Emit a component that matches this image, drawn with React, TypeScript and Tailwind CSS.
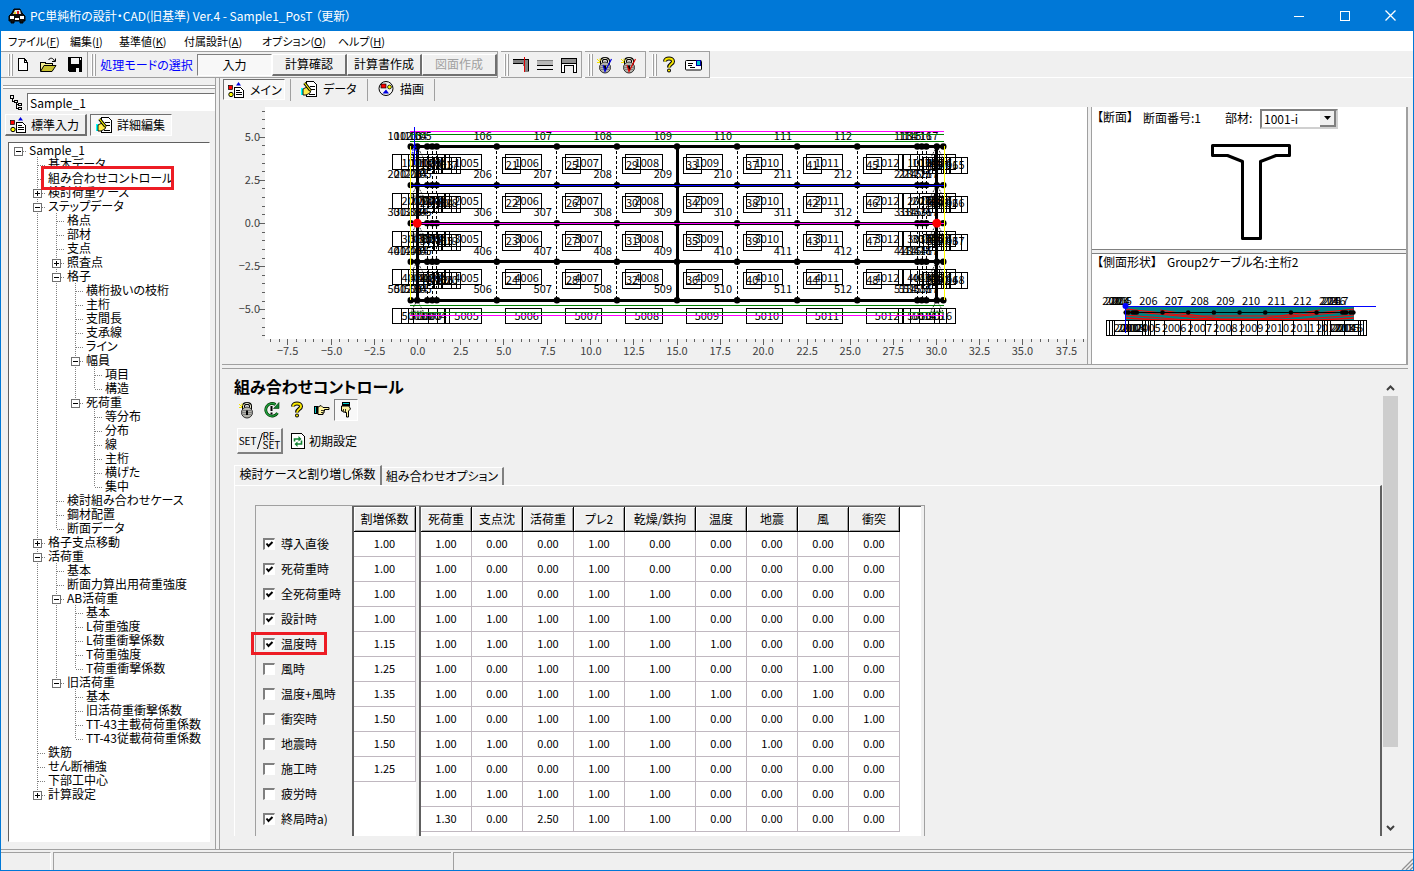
import React, { useState } from "react";
import type { ReactNode } from "react";

/* ---------- icons ---------- */

const crisp = { shapeRendering: "crispEdges" as const };

function CarIcon() {
  return (
    <svg width="18" height="16" viewBox="0 0 18 16" aria-hidden="true">
      <path d="M4 5 L6 1 H12 L14 5 L17 8 V13 H15 V15 H12 V13 H6 V15 H3 V13 H1 V8 Z" fill="#111" stroke="#000" />
      <path d="M5 6 L7 2 H12 L13 6 Z" fill="#e8e8e8" />
      <path d="M9 3 H11 V6 H9 Z" fill="#e02020" />
      <path d="M6 4 H8 V6 H6 Z" fill="#e8d820" />
      <path d="M2 8 H6 V11 H2 Z M12 8 H16 V11 H12 Z M7 10 H11 V12 H7 Z" fill="#fff" />
    </svg>
  );
}

function NewIcon() {
  return (
    <svg width="16" height="16" viewBox="0 0 16 16" {...crisp} aria-hidden="true">
      <path d="M3.500 1.500 H9.500 L12.500 5.500 V13.500 H3.500 Z" fill="#fff" stroke="#000" />
      <path d="M9.500 1.500 V5.500 H12.500" fill="none" stroke="#000" />
    </svg>
  );
}

function OpenIcon() {
  return (
    <svg width="18" height="16" viewBox="0 0 18 16" aria-hidden="true">
      <path d="M1.500 14 V5 H6 L7 6.500 H13 V8.500" fill="#f4ee90" stroke="#000" {...crisp} />
      <path d="M1.500 14.500 L5 8.500 H17 L13 14.500 Z" fill="#c8c030" stroke="#000" />
      <path d="M9.500 3 C11 .5 14 .5 15.500 4 M16.500 1.500 V4.500 H13" fill="none" stroke="#000" />
    </svg>
  );
}

function SaveIcon() {
  return (
    <svg width="16" height="16" viewBox="0 0 16 16" {...crisp} aria-hidden="true">
      <path d="M1 0 H15 V15 H2 L1 14 Z" fill="#000" />
      <path d="M4 1 H12 V7 H4 Z" fill="#f4f4f4" />
      <path d="M4 10 H12 V15 H4 Z" fill="#000" />
      <path d="M9 11 H12 V15 H9 Z" fill="#f4f4f4" />
      <path d="M13 1 H14 V3 H13 Z" fill="#fff" />
    </svg>
  );
}

function ShapesDocIcon() {
  return (
    <svg width="16" height="16" viewBox="0 0 16 16" aria-hidden="true">
      <path d="M8 3.500 L10.500 0 L13 3.500 Z" fill="#0000e0" />
      <rect x=".5" y="3.500" width="4" height="4" fill="#f00" stroke="#000" strokeWidth=".7" />
      <circle cx="3" cy="12.500" r="2.200" fill="#ff0" stroke="#000" />
      <path d="M6.500 5.500 H12.500 L15.500 8.500 V15.500 H6.500 Z" fill="#fff" stroke="#000" {...crisp} />
      <path d="M8 8.500 H12 M8 10.500 H14 M8 12.500 H14" stroke="#000" {...crisp} />
    </svg>
  );
}

function EditDocIcon() {
  return (
    <svg width="16" height="16" viewBox="0 0 16 16" aria-hidden="true">
      <path d="M5.500 .5 H12.500 L15.500 3.500 V15.500 H5.500 Z" fill="#fff" stroke="#000" {...crisp} />
      <path d="M9 5.500 H14 M10 8.500 H14 M8 13.500 H14" stroke="#000" {...crisp} />
      <path d="M0 7 H2 V14 H0 Z" fill="#0ff" />
      <path d="M2 8 L6 6 L10 9 L9 12 L5 14 H2 Z" fill="#ffec50" stroke="#000" strokeWidth=".9" />
      <path d="M3.500 2 L9.500 9.500" stroke="#000" strokeWidth="3" />
      <path d="M3.500 2 L9.500 9.500" stroke="#ff0" strokeWidth="1.200" />
    </svg>
  );
}

function DrawIcon() {
  return (
    <svg width="16" height="16" viewBox="0 0 16 16" aria-hidden="true">
      <circle cx="8" cy="7.500" r="7" fill="#f4f4f4" stroke="#000" />
      <rect x="3" y="3" width="5" height="4" fill="#f00" stroke="#000" strokeWidth=".7" />
      <circle cx="11.500" cy="6" r="1.900" fill="#ff0" stroke="#000" strokeWidth=".8" />
      <path d="M4.500 12.500 L8 8.500 L11 12.500 Z" fill="#0000e0" />
    </svg>
  );
}

function TreeIcon() {
  return (
    <svg width="14" height="16" viewBox="0 0 14 16" {...crisp} aria-hidden="true">
      <path
        d="M1.500 1.500 H4.500 V4.500 H1.500 Z M5.500 6.500 H8.500 V8.500 H5.500 Z M9.500 9.500 H12.500 V11.500 H9.500 Z M9.500 13.500 H12.500 V15.500 H9.500 Z M3.500 5 V7.500 H5 M7.500 9 V14.500 H9 M7.500 10.500 H9"
        fill="none"
        stroke="#000"
      />
    </svg>
  );
}

function GirderCutIcon() {
  return (
    <svg width="18" height="16" viewBox="0 0 18 16" {...crisp} aria-hidden="true">
      <path d="M1 2 H17 V15 H13 L11 7 L1 6 Z" fill="#808080" />
      <path d="M1 2.500 H17 M1 6.500 H11 M16.500 3 V14" stroke="#000" fill="none" />
      <path d="M12.500 0 V15" stroke="#e00000" />
    </svg>
  );
}

function GirderSideIcon() {
  return (
    <svg width="18" height="16" viewBox="0 0 18 16" {...crisp} aria-hidden="true">
      <path d="M1 3 H17 V9 H1 Z" fill="#b8b8b8" />
      <path d="M1 8.500 H17 M1 12.500 H17" stroke="#000" />
      <path d="M1 3.500 H17" stroke="#808080" />
    </svg>
  );
}

function PierIcon() {
  return (
    <svg width="18" height="16" viewBox="0 0 18 16" {...crisp} aria-hidden="true">
      <path d="M1.500 2.500 H16.500 V15.500 H13.500 V8.500 H4.500 V15.500 H1.500 Z" fill="#fff" stroke="#000" />
      <path d="M1.500 1.500 H16.500 V6.500 H1.500 Z" fill="#909090" stroke="#000" />
    </svg>
  );
}

function LockIcon({ check }: { check?: string }) {
  return (
    <svg width="18" height="18" viewBox="0 0 18 18" aria-hidden="true">
      <path d="M5.500 8 V5 C5.500 1.500 12.500 1.500 12.500 5 V8" fill="none" stroke="#000" strokeWidth="3" />
      <path d="M5.500 8 V5 C5.500 1.500 12.500 1.500 12.500 5 V8" fill="none" stroke="#e8e8d0" strokeWidth="1" />
      <circle cx="9" cy="11.500" r="5.500" fill="#b4b4ac" stroke="#303030" />
      <path d="M4 9.500 H14 M4 11.500 H14 M4.500 13.500 H13.500" stroke="#808080" {...crisp} />
      <path d="M9 9.500 V14 M8 10.500 H10" stroke="#000" strokeWidth="2" />
      <path d="M1 3 L4 6 M4 2.500 V5 M1 6.500 H4" stroke="#f0e000" />
      {check && <path d="M7 9 L9 15.500 L15.500 3" fill="none" stroke={check} strokeWidth="1.200" />}
    </svg>
  );
}

function HelpIcon() {
  return (
    <svg width="14" height="17" viewBox="0 0 14 17" aria-hidden="true">
      <path d="M3 5.500 C3 1.500 11 1.500 11 5.500 C11 8 7 8 7 11.500" fill="none" stroke="#000" strokeWidth="4" />
      <circle cx="7" cy="14.500" r="2" fill="#000" />
      <path d="M3 5.500 C3 1.500 11 1.500 11 5.500 C11 8 7 8 7 11.500" fill="none" stroke="#f4e400" strokeWidth="2" />
      <circle cx="7" cy="14.500" r="1.100" fill="#f4e400" />
    </svg>
  );
}

function MailIcon() {
  return (
    <svg width="17" height="12" viewBox="0 0 17 12" aria-hidden="true">
      <rect x=".5" y="1.500" width="16" height="9.500" rx="1" fill="#fff" stroke="#000" />
      <path d="M3 4.500 H8 M3 6.500 H7 M5 8.500 H10" stroke="#000" {...crisp} />
      <path d="M11.500 1.500 H15.500 V6.500 H11.500 Z" fill="#0cc" stroke="#0000a0" {...crisp} />
    </svg>
  );
}

function ReloadIcon() {
  return (
    <svg width="16" height="16" viewBox="0 0 16 16" aria-hidden="true">
      <path d="M11.500 2.500 A6.300 6.300 0 1 0 13.500 11" fill="none" stroke="#003800" strokeWidth="2.800" />
      <path d="M11.500 2.500 A6.300 6.300 0 1 0 13.500 11" fill="none" stroke="#20a040" strokeWidth="1.400" />
      <path d="M15 .5 V6.500 H9.500 Z" fill="#108030" stroke="#003800" strokeWidth=".6" />
      <path d="M7.500 4 V9 M7.500 10.500 V12.500" stroke="#000" strokeWidth="2" />
    </svg>
  );
}

function HandIcon({ down }: { down?: boolean }) {
  return (
    <svg width="16" height="16" viewBox="0 0 16 16" className={down ? "rotate-90" : ""} aria-hidden="true">
      <path d="M0 4 H4 V12 H0 Z" fill="#000" />
      <path d="M1 5 H2 V11 H1 Z" fill="#0cc" />
      <path
        d="M4 5 L7 3.500 L9 5.500 H15 V7.500 H10.500 V9 H10 V11 H9 V12.500 H4 Z"
        fill="#fff4a0"
        stroke="#000"
        strokeWidth="1"
      />
      <path d="M7 8.500 H10 M7 10.500 H9" stroke="#000" strokeWidth=".8" />
    </svg>
  );
}

function ResetDocIcon() {
  return (
    <svg width="14" height="16" viewBox="0 0 14 16" aria-hidden="true">
      <path d="M.5 .5 H10.500 L13.500 3.500 V15.500 H.5 Z" fill="#fff" stroke="#000" {...crisp} />
      <path d="M3.500 8.500 V6 H8 M10.500 7.500 V11 H6" fill="none" stroke="#108030" strokeWidth="1.600" />
      <path d="M7.500 3 L10.500 6 L7.500 8.500 Z M6.500 8.500 L3.500 11 L6.500 14 Z" fill="#108030" />
    </svg>
  );
}

/* ---------- small building blocks ---------- */

function Grip() {
  return (
    <span className="flex h-[22px] shrink-0 gap-px pl-[3px]">
      <span className="w-0.5 border-r border-[#a0a0a0] bg-white" />
      <span className="w-0.5 border-r border-[#a0a0a0] bg-white" />
    </span>
  );
}

function BarGroup({ className, children }: { className?: string; children: ReactNode }) {
  return (
    <div className={`flex h-[27px] items-center border border-l-0 border-[#a0a0a0] ${className ?? "mr-[3px]"}`}>
      <Grip />
      {children}
    </div>
  );
}

function IconButton({ label, className, children }: { label: string; className?: string; children: ReactNode }) {
  return (
    <button type="button" aria-label={label} className={`grid h-[22px] shrink-0 place-items-center ${className ?? "w-6"}`}>
      {children}
    </button>
  );
}

function ModeButton({ label, pressed, disabled }: { label: string; pressed?: boolean; disabled?: boolean }) {
  const look = pressed
    ? "border border-t-[#808080] border-l-[#808080] border-r-white border-b-white bg-[#f8f8f8]"
    : "border-r-2 border-b-2 border-t border-l border-t-white border-l-white border-r-[#707070] border-b-[#707070]";
  return (
    <button
      type="button"
      disabled={disabled}
      className={`h-[22px] w-[75px] text-center text-[12px] leading-[18px] ${look} ${disabled ? "text-[#a0a0a0]" : "text-black"}`}
    >
      {label}
    </button>
  );
}

/* ---------- tree ---------- */

type Node = { t: string; open?: boolean; c?: Node[] };
const leaf = (...names: string[]): Node[] => names.map((t) => ({ t }));

const TREE: Node = {
  t: "Sample_1",
  open: true,
  c: [
    ...leaf("基本データ", "組み合わせコントロール"),
    { t: "検討荷重ケース", open: false },
    {
      t: "ステップデータ",
      open: true,
      c: [
        ...leaf("格点", "部材", "支点"),
        { t: "照査点", open: false },
        {
          t: "格子",
          open: true,
          c: [
            ...leaf("横桁扱いの枝桁", "主桁", "支間長", "支承線", "ライン"),
            { t: "幅員", open: true, c: leaf("項目", "構造") },
            { t: "死荷重", open: true, c: leaf("等分布", "分布", "線", "主桁", "横げた", "集中") },
          ],
        },
        ...leaf("検討組み合わせケース", "鋼材配置", "断面データ"),
      ],
    },
    { t: "格子支点移動", open: false },
    {
      t: "活荷重",
      open: true,
      c: [
        ...leaf("基本", "断面力算出用荷重強度"),
        { t: "AB活荷重", open: true, c: leaf("基本", "L荷重強度", "L荷重衝撃係数", "T荷重強度", "T荷重衝撃係数") },
        { t: "旧活荷重", open: true, c: leaf("基本", "旧活荷重衝撃係数", "TT-43主載荷荷重係数", "TT-43従載荷荷重係数") },
      ],
    },
    ...leaf("鉄筋", "せん断補強", "下部工中心"),
    { t: "計算設定", open: false },
  ],
};

function Guide({ up, down, right, box }: { up?: boolean; down?: boolean; right?: boolean; box?: "+" | "-" }) {
  return (
    <svg width="19" height="14" viewBox="0 0 19 14" className="shrink-0" {...crisp} aria-hidden="true">
      <g stroke="#808080" strokeDasharray="1 1">
        {up && <path d="M9.500 0 V8" />}
        {down && <path d="M9.500 8 V14" />}
        {right && <path d="M10 8.500 H18" />}
      </g>
      {box && (
        <g>
          <rect x="5.500" y="4.500" width="8" height="8" fill="#fff" stroke="#707070" />
          <path d={box === "+" ? "M7 8.500 H12 M9.500 6 V11" : "M7 8.500 H12"} stroke="#000" />
        </g>
      )}
    </svg>
  );
}

function TreeRow({ node, trail, last, root }: { node: Node; trail: boolean[]; last: boolean; root?: boolean }) {
  const box = node.open === undefined ? undefined : node.open ? "-" : "+";
  const marked = node.t === "組み合わせコントロール";
  return (
    <li>
      <div className="relative flex h-[14px] items-center">
        {trail.map((line, i) => (
          <Guide key={i} up={line} down={line} />
        ))}
        <Guide up={!root} down={!root && !last} right box={box} />
        {marked && <span className="absolute -top-[5px] left-[32px] h-[24px] w-[133px] border-[3px] border-[#ed1c24] bg-white" />}
        <span className={`pl-px whitespace-nowrap ${marked ? "relative z-10" : ""}`}>{node.t}</span>
        {marked && <span className="absolute -top-[5px] left-[32px] z-10 h-[24px] w-[133px] border-[3px] border-[#ed1c24]" />}
      </div>
      {node.c && (
        <ul>
          {node.c.map((child, i) => (
            <TreeRow key={i} node={child} trail={[...trail, !root && !last]} last={i === node.c!.length - 1} />
          ))}
        </ul>
      )}
    </li>
  );
}

function Sidebar() {
  return (
    <aside className="flex w-[219px] shrink-0 flex-col border-r border-[#a0a0a0] pr-[3px]">
      <div className="flex min-h-0 flex-1 flex-col border-r border-[#a0a0a0] pb-[7px]">
        <div className="mt-[7px] ml-0.5 h-1 border-t border-b border-[#a0a0a0] bg-white" />
        <div className="mt-1 flex items-center pl-2">
          <TreeIcon />
          <input
            aria-label="データ名"
            defaultValue="Sample_1"
            className="ml-1 h-[18px] min-w-0 flex-1 border border-t-[#707070] border-r-white border-b-white border-l-[#707070] bg-white pl-0.5 text-[12px] leading-4 outline-none"
          />
        </div>
        <div className="mt-[3px] flex gap-[3px] pl-1">
          <button
            type="button"
            className="flex h-[22px] w-[82px] items-center gap-[5px] border-t border-r-2 border-b-2 border-l border-t-white border-r-[#707070] border-b-[#707070] border-l-white pl-1"
          >
            <ShapesDocIcon />
            標準入力
          </button>
          <button
            type="button"
            className="flex h-[22px] w-[82px] items-center gap-[5px] border border-t-[#707070] border-r-white border-b-white border-l-[#707070] bg-[#f8f8f8] pl-[5px]"
          >
            <EditDocIcon />
            詳細編集
          </button>
        </div>
        <ul className="mt-[6px] mr-[5px] ml-[7px] min-h-0 flex-1 overflow-hidden border border-t-[#606060] border-r-white border-b-white border-l-[#606060] bg-white leading-[14px]">
          <TreeRow node={TREE} trail={[]} last root />
        </ul>
      </div>
    </aside>
  );
}

/* ---------- drawings ---------- */

const NODES = [410.5, 417, 427, 432, 436.5, 496.5, 556.5, 616.5, 676.5, 736.5, 796.5, 856.5, 916.5, 921, 925.5, 936, 942.5];
const GIRDERS = [146.5, 185, 223, 261.5, 300];
const mids = NODES.slice(1).map((x, i) => (x + NODES[i]) / 2);
const X0 = 417.5;
const Y0 = 223.5;
const UNIT = 17.27;

function PlanView() {
  const xt = Array.from({ length: 112 }, (_, i) => (i - 17) / 2).filter((v) => v <= 38.5);
  const yt = Array.from({ length: 27 }, (_, i) => (i - 13) / 2);
  const px = (v: number) => Math.round(X0 + v * UNIT - 0.5) + 0.5;
  const py = (v: number) => Math.round(Y0 - v * UNIT - 0.5) + 0.5;
  return (
    <svg viewBox="225 107 861 257" className="h-[257px] w-full" preserveAspectRatio="xMinYMin slice" role="img" aria-label="平面図">
      <rect x="265" y="107" width="1200" height="232" fill="#fff" />
      <g stroke="#606060" {...crisp}>
        {xt.map((v) => (
          <path key={v} d={`M${px(v)} 339 v${v % 2.5 === 0 ? 6 : 3}`} />
        ))}
        {yt.map((v) => (
          <path key={v} d={`M265 ${py(v)} h${v % 2.5 === 0 ? -6 : -3}`} />
        ))}
      </g>
      <g fill="#404040" fontSize="11">
        {xt
          .filter((v) => v % 2.5 === 0)
          .map((v) => (
            <text key={v} x={px(v)} y="355" textAnchor="middle">
              {v < 0 ? `−${(-v).toFixed(1)}` : v.toFixed(1)}
            </text>
          ))}
        {[5, 2.5, 0, -2.5, -5].map((v) => (
          <text key={v} x="260" y={py(v) + 3} textAnchor="end">
            {v < 0 ? `−${(-v).toFixed(1)}` : v.toFixed(1)}
          </text>
        ))}
      </g>

      <g {...crisp} fill="none">
        {NODES.map((x, i) =>
          [1, 8, 15].includes(i) ? (
            <path key={x} d={`M${x} 146 V300`} stroke="#000" strokeWidth="3" />
          ) : i > 0 && i < 16 ? (
            <path key={x} d={`M${Math.floor(x) + 0.5} 146 V300`} stroke="#000" strokeDasharray="3 2" />
          ) : null,
        )}
        {GIRDERS.map((y) => (
          <path key={y} d={`M410 ${y} H943`} stroke="#000" strokeWidth="3" />
        ))}
      </g>
      {GIRDERS.map((y) => NODES.map((x) => <circle key={`${x}-${y}`} cx={x} cy={y} r="3.200" />))}
      <g fill="none" stroke="#000" strokeWidth=".8" strokeDasharray="2 1">
        {GIRDERS.map((y) => (
          <path key={y} d={`M417 ${y} l-6 11 h12 z M936 ${y} l-6 11 h12 z`} />
        ))}
      </g>

      <g {...crisp} fill="none" stroke="#000">
        {GIRDERS.map((y) =>
          mids.map((m) => <rect key={`${m}-${y}`} x={Math.floor(m - 21) + 0.5} y={Math.floor(y) + 8.5} width="36" height="15" />),
        )}
        {GIRDERS.slice(0, 4).map((y) =>
          NODES.map((x) => <rect key={`${x}-${y}`} x={Math.floor(x + 6) + 0.5} y={Math.floor(y) + 11.5} width="18" height="16" />),
        )}
      </g>
      <g fontSize="11">
        {GIRDERS.map((y, r) =>
          NODES.map((x, i) => (
            <text key={`${x}-${y}`} x={x - 5} y={y - 7} textAnchor="end">
              {(r + 1) * 100 + i + 1}
            </text>
          )),
        )}
        {GIRDERS.map((y, r) =>
          mids.map((m, i) => (
            <text key={`${m}-${y}`} x={m + 12} y={y + 20} textAnchor="end">
              {(r + 1) * 1000 + i + 1}
            </text>
          )),
        )}
        {GIRDERS.slice(0, 4).map((y, r) =>
          NODES.map((x, i) => (
            <text key={`${x}-${y}`} x={x + 9} y={y + 22}>
              {i * 4 + r + 1}
            </text>
          )),
        )}
      </g>

      <g {...crisp} fill="none">
        <path d="M410 134.500 H943 M410 141.500 H943 M410 305.500 H943 M410 312.500 H943" stroke="#008000" />
        <path d="M410 131.500 H943 M410 315.500 H943 M410 223.500 H943" stroke="#f0f" />
        <path d="M410 185.500 H943" stroke="#00f" />
        <path d="M410.500 146 V300 M943.500 146 V300" stroke="#ff0" />
        <path d="M414.500 127 V165" stroke="#00f" />
      </g>
      <path d="M414.500 143 l-3 12 M414.500 143 l3 12" stroke="#00f" strokeDasharray="2 1" />
      <circle cx="417" cy="223" r="4.500" fill="#f00" />
      <circle cx="936" cy="223" r="4.500" fill="#f00" />
    </svg>
  );
}

function SectionView() {
  return (
    <svg width="80" height="98" viewBox="1211 143 80 98" className="mx-auto" role="img" aria-label="断面図">
      <path
        d="M1212.500 145.500 H1289.500 V155.500 H1276 L1260.500 161.500 V238.500 H1242.500 V161.500 L1227.500 155.500 H1212.500 Z"
        fill="#fff"
        stroke="#000"
        strokeWidth="3"
        strokeLinejoin="round"
      />
    </svg>
  );
}

function SideView() {
  const sx = (x: number) => 1162.5 + (x - 496.5) * 0.428;
  const nodes = NODES.map(sx);
  const centres = nodes.slice(1).map((x, i) => (x + nodes[i]) / 2);
  return (
    <svg viewBox="1100 293 280 48" className="h-[48px] w-[280px]" role="img" aria-label="側面図">
      <rect x="1126" y="307" width="228" height="14" fill="#008080" />
      <g fill="none" stroke="#f00">
        <path d="M1126 309 L1190 316 H1290 L1354 309" />
        <path d="M1126 311 L1210 319 H1270 L1354 311" />
        <path d="M1126 315 L1180 319.500 H1300 L1354 315" />
        <path d="M1126 318 L1160 320 H1320 L1354 318" strokeWidth="1.500" />
        <path d="M1160 310 L1220 319 M1320 310 L1260 319" />
      </g>
      <path d="M1126 312.500 H1354" stroke="#000" {...crisp} />
      {nodes.map((x) => (
        <circle key={x} cx={x} cy="312.500" r="2.300" />
      ))}
      <g {...crisp} fill="none" stroke="#000">
        {centres.map((m) => (
          <rect key={m} x={Math.floor(m - 21) + 0.5} y="320.500" width="36" height="15" />
        ))}
      </g>
      <g fontSize="11">
        {nodes.map((x, i) => (
          <text key={x} x={x - 5} y="305" textAnchor="end">
            {201 + i}
          </text>
        ))}
        {centres.map((m, i) => (
          <text key={m} x={m + 11} y="332" textAnchor="end">
            {2001 + i}
          </text>
        ))}
      </g>
      <path d="M1125 306.500 H1376 M1125.500 304 V333" stroke="#00f" {...crisp} />
      <circle cx="1125.500" cy="306" r="3" fill="#00f" />
    </svg>
  );
}

function ViewTabs() {
  return (
    <div className="flex h-[29px] items-start pt-px pl-[3px]" role="tablist">
      <button
        type="button"
        role="tab"
        aria-selected="true"
        className="flex h-[21px] w-[62px] items-center gap-[6px] border border-t-[#707070] border-r-white border-b-white border-l-[#707070] bg-[#f8f8f8] pl-1"
      >
        <ShapesDocIcon />
        メイン
      </button>
      <span className="ml-[5px] h-[22px] w-px bg-[#a0a0a0]" />
      <button type="button" role="tab" aria-selected="false" className="flex h-5 w-[76px] items-center gap-[6px] pl-[10px]">
        <EditDocIcon />
        データ
      </button>
      <span className="h-[22px] w-px bg-[#a0a0a0]" />
      <button type="button" role="tab" aria-selected="false" className="flex h-5 w-[66px] items-center gap-[6px] pl-[10px]">
        <DrawIcon />
        描画
      </button>
      <span className="h-[22px] w-px bg-[#a0a0a0]" />
    </div>
  );
}

function Viewer() {
  return (
    <section className="mr-[5px] ml-[2px] flex h-[262px] shrink-0 border-b border-[#a0a0a0] pb-[3px]">
      <div className="flex min-w-0 flex-1 overflow-hidden border-b border-[#a0a0a0] pl-[3px]">
        <PlanView />
      </div>
      <div className="w-[5px] shrink-0 border-x border-b border-[#a0a0a0]" />
      <div className="flex w-[316px] shrink-0 flex-col border-r-2 border-b border-[#a0a0a0]">
        <div className="flex h-[143px] flex-col border-b border-[#808080] bg-white">
          <div className="flex h-9 items-start pt-[2px] pl-px">
            <span className="w-[50px] pl-1 whitespace-nowrap">【断面】</span>
            <span className="w-[82px] pt-px">断面番号:1</span>
            <label htmlFor="member" className="w-[35px] pt-px">
              部材:
            </label>
            <div className="relative h-5 w-[78px] border-2 border-t-[#808080] border-r-[#d0d0d0] border-b-[#d0d0d0] border-l-[#808080]">
              <select id="member" className="h-4 w-full appearance-none bg-white pl-[2px] text-[12px] leading-4 outline-none">
                <option>1001-i</option>
              </select>
              <span className="pointer-events-none absolute top-0 right-0 grid h-4 w-[16px] place-items-center border-r-2 border-b-2 border-[#808080] bg-[#f0f0f0]">
                <svg width="7" height="4" viewBox="0 0 7 4" aria-hidden="true">
                  <path d="M0 0 H7 L3.500 4 Z" />
                </svg>
              </span>
            </div>
          </div>
          <div className="flex pl-1">
            <SectionView />
          </div>
        </div>
        <div className="h-1 shrink-0 border-b border-[#808080]" />
        <div className="flex flex-1 flex-col bg-white">
          <div className="flex pl-px">
            <span className="w-[74px] pl-1 whitespace-nowrap">【側面形状】</span>
            <span>Group2ケーブル名:主桁2</span>
          </div>
          <div className="pt-[23px] pl-2">
            <SideView />
          </div>
        </div>
      </div>
    </section>
  );
}

/* ---------- coefficient grid ---------- */

type Case = { name: string; on: boolean; f: string; v: string };
const COLS = ["死荷重", "支点沈", "活荷重", "プレ2", "乾燥/鉄拘", "温度", "地震", "風", "衝突"];
const CASES: Case[] = [
  { name: "導入直後", on: true, f: "1.00", v: "1.00 0.00 0.00 1.00 0.00 0.00 0.00 0.00 0.00" },
  { name: "死荷重時", on: true, f: "1.00", v: "1.00 0.00 0.00 1.00 0.00 0.00 0.00 0.00 0.00" },
  { name: "全死荷重時", on: true, f: "1.00", v: "1.00 1.00 0.00 1.00 1.00 0.00 0.00 0.00 0.00" },
  { name: "設計時", on: true, f: "1.00", v: "1.00 1.00 1.00 1.00 1.00 0.00 0.00 0.00 0.00" },
  { name: "温度時", on: true, f: "1.15", v: "1.00 1.00 1.00 1.00 1.00 1.00 0.00 0.00 0.00" },
  { name: "風時", on: false, f: "1.25", v: "1.00 0.00 1.00 1.00 1.00 0.00 0.00 1.00 0.00" },
  { name: "温度+風時", on: false, f: "1.35", v: "1.00 0.00 1.00 1.00 1.00 1.00 0.00 1.00 0.00" },
  { name: "衝突時", on: false, f: "1.50", v: "1.00 0.00 1.00 1.00 1.00 0.00 0.00 0.00 1.00" },
  { name: "地震時", on: false, f: "1.50", v: "1.00 1.00 0.00 1.00 1.00 0.00 1.00 0.00 0.00" },
  { name: "施工時", on: false, f: "1.25", v: "1.00 0.00 0.00 1.00 1.00 0.00 0.00 0.00 0.00" },
  { name: "疲労時", on: false, f: "", v: "1.00 1.00 1.00 1.00 1.00 0.00 0.00 0.00 0.00" },
  { name: "終局時a)", on: true, f: "", v: "1.30 0.00 2.50 1.00 1.00 0.00 0.00 0.00 0.00" },
];

const TH = "h-[25px] border-r border-b border-black bg-[#f0f0f0] p-0 text-center font-normal shadow-[inset_1px_1px_0_#fff,inset_-1px_-1px_0_#a0a0a0]";
const TD = "h-[25px] border-r border-b border-[#c0b8c0] p-0 pb-0.5 text-center text-[11px]";

function CaseGrid() {
  const [on, setOn] = useState(CASES.map((c) => c.on));
  return (
    <div className="ml-5 flex h-full w-[670px] border-t border-r border-l border-[#a0a0a0]">
      <ul className="w-24 shrink-0 pt-[25px]">
        {CASES.map((c, i) => (
          <li key={c.name} className="relative h-[25px]">
            <label className="flex h-[25px] items-center gap-[6px] pl-[7px] whitespace-nowrap">
              <span className="grid size-3 shrink-0">
                <input
                  type="checkbox"
                  checked={on[i]}
                  onChange={() => setOn(on.map((v, k) => (k === i ? !v : v)))}
                  className="peer size-3 appearance-none border-t-2 border-r border-b border-l-2 border-t-[#808080] border-r-white border-b-white border-l-[#808080] bg-white [grid-area:1/1]"
                />
                <svg viewBox="0 0 12 12" className="pointer-events-none invisible size-3 [grid-area:1/1] peer-checked:visible" aria-hidden="true">
                  <path d="M3.500 5.500 L5.500 8 L9.500 4" fill="none" stroke="#000" strokeWidth="2" />
                </svg>
              </span>
              {c.name}
            </label>
            {c.name === "温度時" && (
              <span className="pointer-events-none absolute top-px -left-[5px] h-[23px] w-[76px] border-[3px] border-[#ed1c24]" />
            )}
          </li>
        ))}
      </ul>
      <div className="mr-[3px] w-[64px] shrink-0 border-t border-l-2 border-[#606060] bg-white">
        <table className="w-full table-fixed border-separate border-spacing-0">
          <thead>
            <tr>
              <th scope="col" className={TH}>
                割増係数
              </th>
            </tr>
          </thead>
          <tbody>
            {CASES.filter((c) => c.f).map((c) => (
              <tr key={c.name}>
                <td className={TD}>{c.f}</td>
              </tr>
            ))}
          </tbody>
        </table>
      </div>
      <div className="w-[502px] shrink-0 border-t border-l-2 border-[#606060] bg-white">
        <table className="w-[479px] table-fixed border-separate border-spacing-0">
          <colgroup>
            {COLS.map((c) => (
              <col key={c} className={c === "乾燥/鉄拘" ? "w-[71px]" : "w-[51px]"} />
            ))}
          </colgroup>
          <thead>
            <tr>
              {COLS.map((c) => (
                <th key={c} scope="col" className={TH}>
                  {c}
                </th>
              ))}
            </tr>
          </thead>
          <tbody>
            {CASES.map((c) => (
              <tr key={c.name}>
                {c.v.split(" ").map((v, i) => (
                  <td key={i} className={TD}>
                    {v}
                  </td>
                ))}
              </tr>
            ))}
          </tbody>
        </table>
      </div>
    </div>
  );
}

function Editor() {
  return (
    <section className="flex min-h-0 flex-1 overflow-hidden pr-[15px] pb-[13px] pl-[14px]">
      <div className="flex min-w-0 flex-1 flex-col">
        <h1 className="pt-[5px] text-[16px] leading-6 font-bold">組み合わせコントロール</h1>
        <div className="flex h-[23px] items-center">
          <IconButton label="ロック" className="w-[25px]">
            <LockIcon />
          </IconButton>
          <IconButton label="再計算" className="w-[25px]">
            <ReloadIcon />
          </IconButton>
          <IconButton label="ヘルプ" className="w-[25px]">
            <HelpIcon />
          </IconButton>
          <IconButton label="次へ" className="w-[25px]">
            <HandIcon />
          </IconButton>
          <IconButton label="下へ" className="w-[24px] border border-t-[#808080] border-r-white border-b-white border-l-[#808080] bg-[#f8f8f8]">
            <HandIcon down />
          </IconButton>
        </div>
        <div className="mt-[7px] flex items-center pl-[3px]">
          <button
            type="button"
            className="flex h-[26px] w-[46px] items-center justify-center border-t border-r-2 border-b-2 border-l border-t-white border-r-[#808080] border-b-[#808080] border-l-white text-[10px] leading-[9px]"
          >
            <span>SET</span>
            <svg width="6" height="18" viewBox="0 0 6 18" aria-hidden="true">
              <path d="M.5 17 L5.500 1" stroke="#000" />
            </svg>
            <span className="pb-0.5 text-left">
              RE
              <br />
              SET
            </span>
          </button>
          <button type="button" className="flex items-center gap-1 pl-[8px]">
            <ResetDocIcon />
            初期設定
          </button>
        </div>
        <div className="mt-[11px] flex items-end" role="tablist">
          <button
            type="button"
            role="tab"
            aria-selected="true"
            className="h-5 w-[148px] border-t border-r-2 border-l border-t-white border-r-[#808080] border-l-white pb-1 text-center leading-[15px] whitespace-nowrap"
          >
            検討ケースと割り増し係数
          </button>
          <button
            type="button"
            role="tab"
            aria-selected="false"
            className="h-[18px] w-[122px] border-t border-r-2 border-t-white border-r-[#808080] pb-0.5 text-center leading-[15px] whitespace-nowrap"
          >
            組み合わせオプション
          </button>
        </div>
        <div className="min-h-0 flex-1 overflow-hidden border-t border-r-2 border-l border-t-white border-r-[#606060] border-l-white pt-[19px]">
          <CaseGrid />
        </div>
      </div>
      <div className="ml-px flex w-[15px] shrink-0 flex-col items-center pt-[10px]" aria-hidden="true">
        <svg width="15" height="17" viewBox="0 0 15 17">
          <path d="M4 11 L7.500 7.500 L11 11" fill="none" stroke="#404040" strokeWidth="2" />
        </svg>
        <div className="w-full flex-[351] bg-[#cdcdcd]" />
        <div className="flex-[72]" />
        <svg width="15" height="17" viewBox="0 0 15 17">
          <path d="M4 7 L7.500 10.500 L11 7" fill="none" stroke="#404040" strokeWidth="2" />
        </svg>
      </div>
    </section>
  );
}

/* ---------- window ---------- */

const MENUS: [string, string, string][] = [
  ["ファイル", "F", "w-[62px]"],
  ["編集", "I", "w-[49px]"],
  ["基準値", "K", "w-[65px]"],
  ["付属設計", "A", "w-[78px]"],
  ["オプション", "O", "w-[76px]"],
  ["ヘルプ", "H", "w-[60px]"],
];

export default function App() {
  return (
    <div className="flex h-screen flex-col overflow-hidden border-x border-b border-[#0078d7] bg-[#f0f0f0] font-['Noto_Sans_CJK_JP',sans-serif] text-[12px] leading-4 text-black [font-feature-settings:'palt']">
      <header className="-mx-px flex h-[31px] shrink-0 items-center bg-[#0078d7] pl-2 text-white">
        <CarIcon />
        <span className="flex-1 pl-1 whitespace-pre">PC単純桁の設計・CAD(旧基準) Ver.4 - Sample1_PosT （更新）</span>
        <button type="button" aria-label="最小化" className="grid h-[31px] w-[46px] place-items-center">
          <svg width="10" height="10" viewBox="0 0 10 10" {...crisp}>
            <path d="M0 5.500 H10" stroke="#fff" />
          </svg>
        </button>
        <button type="button" aria-label="最大化" className="grid h-[31px] w-[45px] place-items-center">
          <svg width="10" height="10" viewBox="0 0 10 10" {...crisp}>
            <path d="M.5 .5 H9.500 V9.500 H.5 Z" fill="none" stroke="#fff" />
          </svg>
        </button>
        <button type="button" aria-label="閉じる" className="grid h-[31px] w-[47px] place-items-center">
          <svg width="11" height="11" viewBox="0 0 11 11">
            <path d="M.5 .5 L10.500 10.500 M10.500 .5 L.5 10.500" stroke="#fff" strokeWidth="1.300" />
          </svg>
        </button>
      </header>
      <nav className="flex h-5 shrink-0 items-center bg-white pl-[7px]">
        {MENUS.map(([name, key, w]) => (
          <button key={name} type="button" className={`text-left text-[11px] whitespace-nowrap ${w}`}>
            {name}(<span className="underline">{key}</span>)
          </button>
        ))}
      </nav>
      <div className="flex h-[27px] shrink-0 border-b border-white">
        <BarGroup className="pl-1">
          <IconButton label="新規" className="w-5">
            <NewIcon />
          </IconButton>
          <IconButton label="開く" className="w-[30px]">
            <OpenIcon />
          </IconButton>
          <IconButton label="保存" className="w-6">
            <SaveIcon />
          </IconButton>
        </BarGroup>
        <BarGroup className="mr-[3px]">
          <span className="w-[101px] shrink-0 text-center whitespace-nowrap text-[#0000ff]">処理モードの選択</span>
          <ModeButton label="入力" pressed />
          <ModeButton label="計算確認" />
          <ModeButton label="計算書作成" />
          <ModeButton label="図面作成" disabled />
        </BarGroup>
        <BarGroup>
          <IconButton label="主桁断面">
            <GirderCutIcon />
          </IconButton>
          <IconButton label="主桁側面">
            <GirderSideIcon />
          </IconButton>
          <IconButton label="橋脚">
            <PierIcon />
          </IconButton>
        </BarGroup>
        <BarGroup className="mr-[3px] pr-1">
          <IconButton label="全ロック確認">
            <LockIcon check="#0000e0" />
          </IconButton>
          <IconButton label="全ロック解除">
            <LockIcon check="#e00000" />
          </IconButton>
        </BarGroup>
        <BarGroup className="pr-1">
          <IconButton label="ヘルプ">
            <HelpIcon />
          </IconButton>
          <IconButton label="メール">
            <MailIcon />
          </IconButton>
        </BarGroup>
      </div>

      <div className="flex min-h-0 flex-1 border-b border-[#a0a0a0]">
        <Sidebar />
        <main className="flex min-w-0 flex-1 flex-col">
          <ViewTabs />
          <Viewer />
          <Editor />
        </main>
      </div>

      <footer className="flex h-5 shrink-0 gap-[2px] pt-0.5">
        <div className="w-[50px] border-t border-r border-t-[#a0a0a0] border-r-white" />
        <div className="w-[398px] border-t border-l border-[#a0a0a0]" />
        <div className="flex flex-1 items-end justify-end border-t border-l border-[#a0a0a0]">
          <svg width="12" height="12" viewBox="0 0 12 12" aria-hidden="true">
            <path d="M1 12 L12 1 M5 12 L12 5 M9 12 L12 9" stroke="#909090" strokeWidth="1.300" />
          </svg>
        </div>
      </footer>
    </div>
  );
}
